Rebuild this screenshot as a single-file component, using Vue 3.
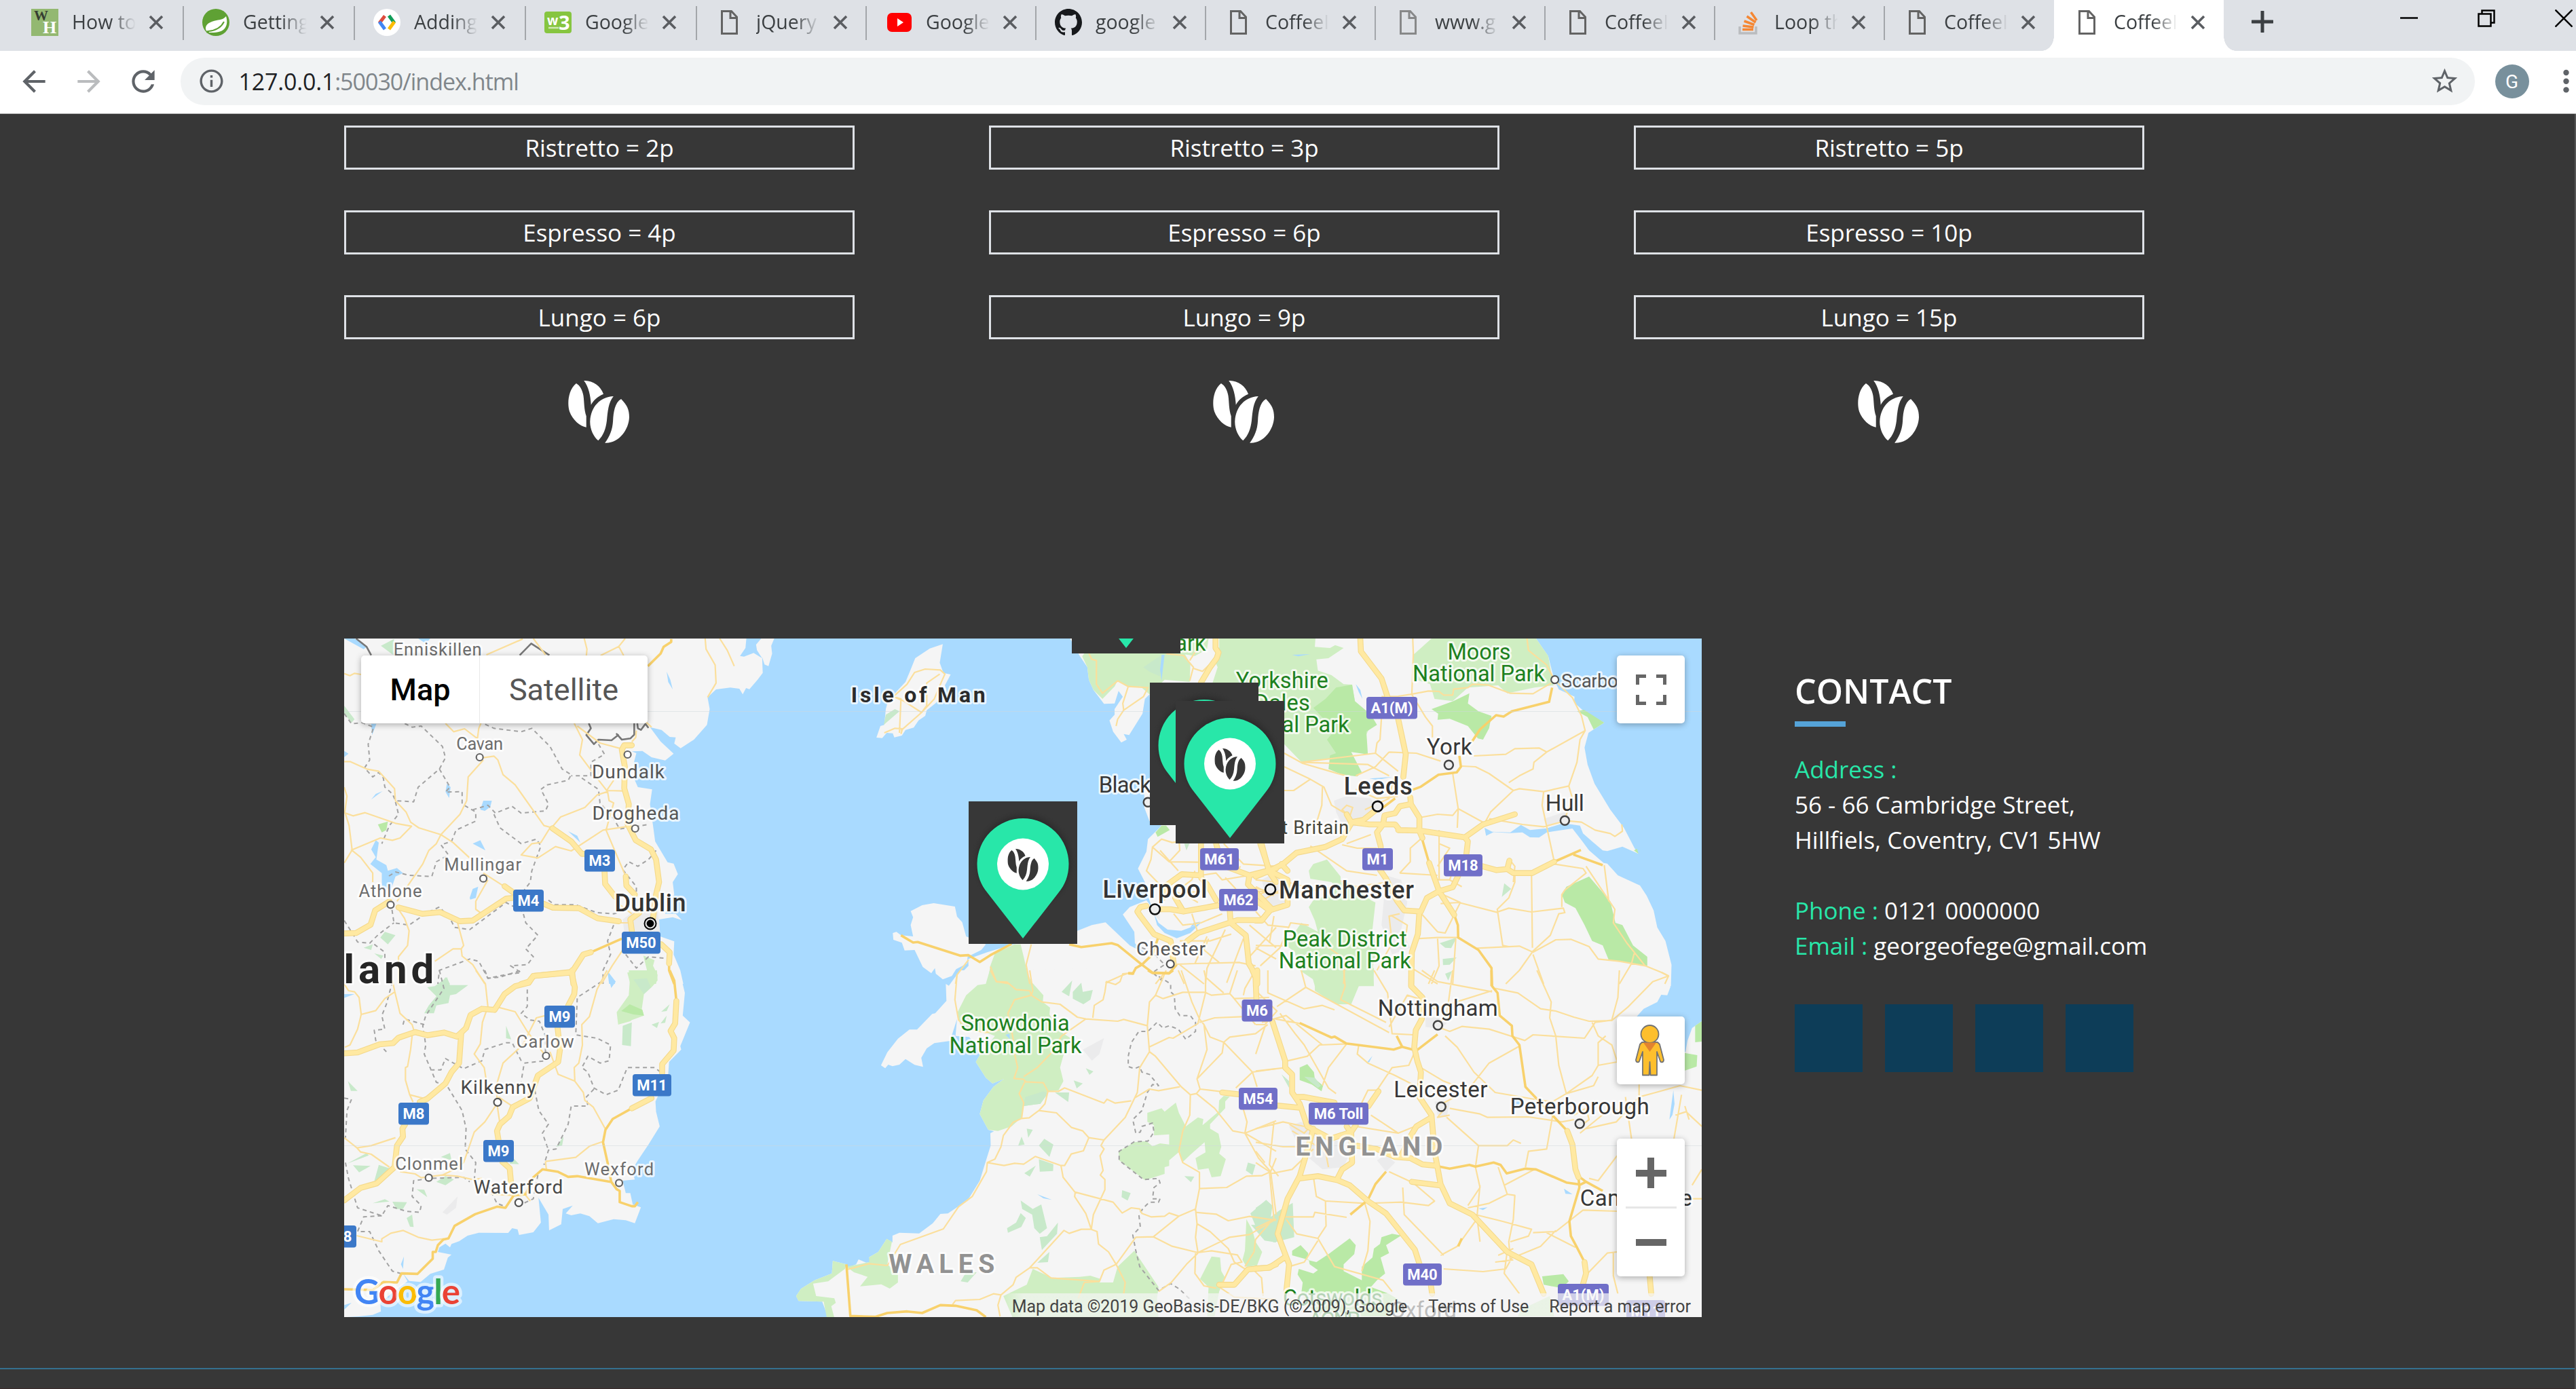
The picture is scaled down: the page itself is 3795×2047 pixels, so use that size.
<script setup>
const tabs = [
  { icon: 'wh', title: 'How to', wide: true },
  { icon: 'spring', title: 'Getting', wide: true },
  { icon: 'dev', title: 'Adding', wide: true },
  { icon: 'w3', title: 'Google', wide: true },
  { icon: 'doc', title: 'jQuery' },
  { icon: 'yt', title: 'Google' },
  { icon: 'gh', title: 'google' },
  { icon: 'doc', title: 'CoffeeI' },
  { icon: 'doc', title: 'www.g', dim: true },
  { icon: 'doc', title: 'CoffeeI' },
  { icon: 'so', title: 'Loop th' },
  { icon: 'doc', title: 'CoffeeI', last: true },
  { icon: 'doc', title: 'CoffeeI', active: true }
]

const prices = [
  ['Ristretto = 2p', 'Espresso = 4p', 'Lungo = 6p'],
  ['Ristretto = 3p', 'Espresso = 6p', 'Lungo = 9p'],
  ['Ristretto = 5p', 'Espresso = 10p', 'Lungo = 15p']
]

// Map sheets: each one has its own drawing units and is placed by its origin.
const SX = 2.24
const SY = 3
const sheets = {
  A: {
    x: 500, y: 930,
    land: 'M0 0L1435 0L1435 33L1425 65L1428 100L1416 155L1403 148L1395 115L1397 185L1380 215L1353 257L1342 252L1331 280L1320 255L1290 250L1243 258L1215 293L1222 345L1213 415L1170 480L1126 518L1105 497L1110 470L1090 468L1063 437L1025 425L1060 488L1103 542L1075 572L1030 558L1000 530L965 532L980 540L970 590L975 660L985 690L1032 700L1025 765L1035 860L1042 930L1083 1022L1103 1028L1117 1075L1100 1110L1105 1165L1090 1200L1075 1250L1110 1250L1130 1278L1100 1265L1055 1275L1058 1350L1105 1372L1103 1430L1125 1500L1135 1560L0 1560Z',
    light: 'M950 1510L1015 1500L1003 1435L1040 1455L1035 1480L1050 1520L1045 1560L960 1560Z',
    dark: 'M127 855L160 842L155 880L140 890Z',
    mint: 'M137 65L180 35L180 108ZM16 330L50 390L40 405L16 365ZM135 1355L150 1330L185 1345L160 1385ZM80 1400L110 1385L105 1410ZM115 1425L145 1435L138 1450ZM350 1530L365 1560H335Z',
    urban: 'M935 1275L975 1235L1050 1235L1058 1330L940 1330Z',
    water: 'M1343 33L1340 75L1322 110L1335 113L1367 97L1395 120L1378 85L1375 60L1392 33ZM16 33L50 33L90 70L80 80ZM260 33L300 33L285 55ZM105 410L122 410L108 460ZM1080 180L1092 215L1100 258L1085 225ZM120 925L130 935L122 1010L155 1035L160 1060L190 1048L210 1070L185 1085L170 1145L140 1130L140 1070L102 1030L120 1000L105 965ZM440 940L465 925L482 970ZM430 1180L440 1140L458 1130L450 1180L432 1187ZM350 710L355 675L367 690L362 738ZM465 790L475 750L503 750L498 778L480 795ZM105 745L120 720L142 708ZM755 885L785 905L795 935ZM885 1508L910 1560L890 1560ZM16 530L30 542L16 557Z',
    minor: 'M16 188L35 197L50 187L72 192M485 105L605 35M640 33L680 105M808 33L817 80L815 108M862 108L922 68L943 33M922 68L938 108M1207 33L1210 80L1240 150L1243 230L1215 293M1255 33L1280 85L1303 155M775 408L802 480L793 548L850 650L885 710L850 725L810 780L730 822L703 865M785 420L860 495L930 520M885 705L935 707M885 710L890 750L905 760L880 880L945 1085M455 480L460 430L467 408M350 408L377 445L413 432L455 475M475 560L510 553L523 570L540 635L580 680L675 860L703 870M475 570L425 645L420 750L398 810L335 900L320 940L295 970L275 1030L190 1195M16 577L35 577L90 610L130 620L182 697L185 750L220 800L235 845L262 870L335 900L375 935L430 1003M16 803L45 817L85 803L185 850L238 863L200 915L175 925L135 915L40 968L70 1000L110 1070L110 1110M16 690L25 730L18 800L32 860L42 968L16 1025M945 865L870 880L765 972L713 953L655 1003L600 990L635 940L665 935L695 870M475 1070L545 1130M490 1100L450 1195L450 1230L465 1245M390 1290L410 1390L402 1405L375 1405L315 1460M402 1405L405 1437L440 1475L480 1560M190 1220L215 1270L230 1325L225 1390L195 1440L195 1560M920 1290L955 1290M945 1390L900 1480L865 1560M980 440L978 470L965 490M1010 400L1030 425M905 660L882 705M925 1210L965 1250',
    trunk: 'M830 1420L932 1360M1088 1470L1088 1500L1105 1560M1018 155L1060 100L1070 70L1095 48L1095 35',
    motor: 'M16 1337L55 1335L103 1298L118 1235L165 1195M195 1222L273 1250L333 1243L397 1283L440 1280L550 1183L573 1180M545 1128L573 1155M673 1205L705 1223L790 1225L852 1270L922 1283M703 872L765 930L800 985L810 985M875 1064L877 1118L910 1175M945 1085L947 1125L975 1165M965 505L940 505L932 525L942 600L940 695L955 765L950 850L978 925L1028 965L1045 1010L1055 1110L1045 1165L1035 1270M990 1245L960 1275L965 1325M1062 1385L1090 1420L1088 1470M600 1560L625 1550L640 1525L768 1507L805 1430L830 1420M768 1507L772 1560',
    border: 'M16 365L40 410L75 405L113 425L95 500L100 570L83 605L110 645L130 625L145 650L150 690L175 720L185 750L245 755L260 690L330 610L350 560L340 510L270 420L240 425L210 405M330 610L365 690L350 712L405 710L405 765L450 800L450 840L385 880L370 930L335 945L360 990L320 1020L305 1085L230 1080L185 1065L155 1090M185 755L195 810L165 860L140 940M440 790L490 770L515 805L570 775L600 805L680 795L690 765L665 700L685 680L755 660L765 635L735 610L695 510L635 430L600 445L510 430L470 405M510 810L530 870L600 940L650 920L665 950L635 1060L630 1110L610 1145M855 500L875 545L830 580L830 640L765 640M800 650L855 700L860 760L905 830L925 875L1020 855M1045 970L1020 1010L985 1040L955 1020L935 1055L980 1130L980 1165M170 1200L180 1290L230 1300L290 1245L330 1220L365 1270L380 1310L430 1320L550 1200L605 1240L615 1290L655 1345L615 1405L640 1440L620 1475L565 1480L600 1510L545 1520L490 1535L460 1460L430 1450L330 1500L325 1560M690 1190L710 1210L780 1210L850 1245L905 1250L920 1245M905 1300L885 1370L895 1430L870 1500L870 1560M945 1430L980 1490L1020 1440L1100 1450M16 1280L45 1340L60 1375L100 1380L130 1340L180 1290M115 1385L150 1420L150 1450',
    nation: 'M55 33L90 70L105 107M595 107L633 55L693 107M823 408L830 430L815 460L840 500L855 480L898 483L920 460L915 455L932 480L960 475L973 458L973 408M983 408L985 430L995 437L1010 410L1020 428'
  },
  B: {
    x: 500, y: 1430,
    land: 'M0 0L1122 0L1140 100L1133 200L1157 230L1125 335L1128 350L1088 405L1085 460L1043 580L1045 625L1057 690L1020 770L985 840L965 885L975 925L935 930L945 985L960 985L968 1035L995 1048L975 1118L945 1105L905 1100L853 1118L825 1087L795 1075L765 1083L747 1075L770 1040L737 1055L732 1123L692 1150L690 1080L657 1005L665 1115L640 1158L593 1170L588 1145L570 1140L557 1161L460 1160L423 1173L395 1198L370 1210L365 1225L350 1208L330 1225L325 1245L370 1257L358 1270L345 1323L300 1342L268 1378L230 1373L210 1340L225 1375L180 1420L135 1470L137 1508L110 1523L65 1530L0 1535Z',
    light: 'M955 0L1048 0L1050 45L1030 75L1005 105L998 170L1005 200L965 220L960 225L920 240L915 185L955 110L958 50Z',
    dark: 'M930 180L958 150L1000 175L1005 200L970 195Z',
    mint: 'M290 75L315 70L355 30L365 65L425 65L385 105L365 110L360 145L320 155L312 190L280 190L295 155L320 115ZM970 40L1015 35L1028 75L1005 105ZM935 245L965 230L962 335L933 330ZM550 245L567 305L550 300ZM1090 150L1062 183L1080 180ZM1080 200L1060 235L1075 232ZM1030 240L1055 228L1048 255ZM28 490L60 533L38 533ZM25 855L90 808L97 818ZM45 862L103 865L65 893ZM130 860L165 875L165 900L115 932ZM320 935L350 910L378 925L350 950ZM335 825L365 808L370 840ZM255 968L280 970L290 1003ZM175 1023L223 1025L210 1055L188 1055ZM110 1030L150 1012L165 1022ZM222 1095L240 1080L245 1135L233 1133ZM740 735L735 775L715 780ZM570 825L593 857L562 855Z',
    urban: 'M340 1070L390 1000L385 1050L355 1080Z',
    water: 'M16 105L50 105L16 122ZM203 1300L213 1265L210 1320ZM883 0L912 50L897 78ZM16 1480L40 1470L16 1500Z',
    minor: 'M450 0L482 60L490 160L472 230L465 325L445 370L478 430L485 490M515 160L580 183L620 270L680 378M680 200L650 210L605 330L540 410L520 500L520 580M883 0L850 85L825 205L800 240L802 330L790 410L775 430L777 490L805 540L810 575L838 605L877 700M695 360L722 460L777 490M520 590L530 680M520 590L480 670L445 715L410 850L380 880L340 905M200 890L250 900L270 917L340 905L390 910L440 925L470 920M525 560L570 600M16 740L58 785L105 775L185 740M58 785L70 803L105 813L165 870M240 290L235 350L225 425L218 430L218 485L232 550L243 582M232 550L275 565M183 95L200 190L240 240L247 270M183 95L175 45M183 95L150 125L120 178L72 195L60 260L35 330L18 340M16 60L30 90L50 95L65 120L72 195M680 845L780 827L825 778L870 757M680 845L683 880M57 1173L140 1200L140 1187L170 1162L210 1150L260 1180L305 1193L345 1187M500 990L575 995M600 970L630 1020',
    trunk: 'M1090 0L1105 45L1112 135M965 610L902 657L878 705L870 760L885 850L897 935L915 968L925 975L925 1025L965 1043L975 1043L985 1025M895 935L785 910L755 913L720 890L670 880L640 915L615 990L575 995L548 1050L520 1045L448 1078L380 1130L360 1185L343 1190L325 1215L318 1245L308 1245L308 1275L258 1342L205 1340L190 1380L145 1378L110 1413L16 1410',
    motor: 'M16 367L60 363L133 327L177 322L195 298L250 273L290 287L345 275L388 293L418 255L433 197L470 170L512 175L545 105L580 70L625 55L640 25L765 10M768 0L768 25L777 75L775 105L755 156M720 254L728 350L722 405L655 465L628 565L572 605L560 645L530 680L520 710L525 750M538 847L562 875L566 935M402 280L395 410L370 450L350 500L290 568L265 582M217 681L208 700L210 735L190 775L182 870L123 942L70 962L16 1017M1112 135L1108 235L1093 268L1105 300L1103 355L1065 415L1065 460M1030 565L965 610',
    border: 'M330 0L345 80L285 200L275 245L285 330L280 370L320 495L355 510L405 620L418 700L415 790L450 850L445 930M480 0L490 35L530 30L600 0M620 85L620 160L600 190L630 220L660 225L680 290L680 400L610 410L600 490M865 50L785 120L780 285L850 300L895 330L890 400L860 410L820 380L800 430L820 450L840 520L880 550L920 530L950 430L1040 430L1060 450M840 525L815 560L820 600L765 600L755 680L715 790L690 795L675 860M645 530L658 620L690 680L670 720L690 795M600 400L570 320L550 320L480 350L470 400L410 435L350 390L335 440L305 440M175 50L155 150L140 200L150 260L115 265L120 310L155 360M280 240L215 215L210 240M16 565L40 570L25 620L20 740M20 850L30 920L60 1050L140 1085L160 1040L220 1065L265 1070L270 1040L240 1000L245 930L300 920L410 915L430 935M140 1085L80 1090L60 1155L100 1155L130 1240L175 1330L215 1345M490 950L520 1030L548 1045M655 905L640 1010L600 1035'
  },
  C: {
    x: 1180, y: 930,
    land: 'M468 58L458 140L470 185L494 192L475 240L480 262L445 318L415 350L410 375L388 395L372 427L345 437L333 462L308 470L303 452L283 450L268 473L249 471L262 420L275 415L280 345L288 305L310 275L345 225L362 170L377 120L425 77ZM888 33L920 110L945 160L950 215L965 260L1000 322L1035 320L1048 265L1062 290L1035 345L1035 370L1018 395L1030 445L1057 493L1075 480L1065 455L1083 460L1127 365L1135 300L1150 280L1160 400L1160 600L1155 640L1133 680L1133 780L1150 840L1190 860L1145 920L1140 975L1112 1050L1135 1110L1150 1190L1165 1250L1180 1290L1210 1320L1255 1325L1285 1310L1320 1290L1285 1335L1240 1358L1200 1335L1175 1300L1160 1225L1140 1190L1085 1220L1062 1253L1100 1330L1102 1380L1135 1425L1085 1390L1005 1288L960 1300L912 1325L880 1345L700 1385L615 1420L552 1450L553 1480L495 1560L1600 1560L1600 0ZM362 1238L400 1212L438 1203L508 1218L515 1262L532 1287L545 1350L610 1385L595 1410L550 1440L548 1470L512 1495L498 1525L468 1540L445 1515L442 1490L430 1513L402 1485L375 1410L342 1412L333 1378L305 1365L303 1335L315 1330L330 1345L370 1350L362 1300L370 1265Z',
    light: 'M928 112L940 90L1262 90L1285 145L1283 225L1200 215L1150 280L1120 245L1080 248L1045 218L1035 245L995 300L965 260L950 215L945 160ZM1252 33L1345 33L1340 80L1300 110L1252 100ZM1380 33H1600V500H1500V230H1358L1375 160L1362 120L1380 90ZM705 1385L725 1385L735 1440L755 1560L615 1560L625 1480L640 1425Z',
    dark: 'M1170 890L1190 860L1205 860L1217 880L1177 910Z',
    mint: 'M273 415L280 370L310 345L325 355ZM1265 940H1282L1272 970ZM1130 160L1185 110V200L1150 180Z',
    urban: 'M1165 1220L1180 1220L1185 1280L1160 1250ZM1520 1100L1560 1070L1568 1200L1540 1190Z',
    water: 'M1190 105L1200 105L1195 160L1190 220L1185 170ZM1285 1310L1295 1290L1320 1285Z',
    minor: 'M275 450L310 430L335 432L330 455M325 450L330 300L305 290M330 440L398 360L415 330L415 230L458 190M305 290L340 310L398 360L440 300L465 220L475 190L460 172L410 168L375 183L350 235L305 290M950 100L960 125L975 130L975 235L995 275L1045 220L1080 245L1145 250L1130 290L1065 350L1045 390L1040 420M1080 245L1062 320L1065 350M1205 100L1262 108L1295 160L1283 220M1312 33L1302 90L1283 130M1295 165L1325 178L1355 140M1160 955L1190 920L1225 935L1248 930L1250 970L1215 1020L1160 955L1155 1010L1140 1060L1180 1115M1215 1020L1310 1022M1185 970L1245 1060M1250 1140L1290 1100L1300 1060M1320 1080L1370 1070L1390 1100L1480 1080M1400 1090L1435 1140M1395 940L1460 1030L1568 1040M1285 1180L1310 1200M1450 1040L1440 1060M760 1385L743 1475L755 1560M553 1453L515 1520L510 1560M625 1483L645 1550L690 1560M1240 1473L1300 1470L1340 1350M1250 1475L1330 1560M1300 1470L1445 1465L1500 1480M1335 1560L1340 1490L1400 1320M1405 1555L1440 1430L1460 1360M1500 1400L1568 1450M1245 1500L1265 1560M1480 1300L1568 1400M1005 1555L1055 1525L1080 1513M1200 1510L1170 1560M1180 1115L1250 1160L1320 1150M1230 1250L1260 1300L1320 1290L1390 1250M1310 1335L1290 1250M1420 1340L1350 1370L1250 1370M1480 1130L1568 1160M1500 1100L1568 1110M1490 1180L1568 1130M1480 1440L1568 1310M1345 1360L1330 1410L1380 1465',
    trunk: 'M330 1345L370 1377L385 1375L525 1435L553 1433L590 1463L625 1433L695 1383M885 1385L925 1397L1025 1380L1045 1388L1125 1475L1160 1510L1215 1513L1240 1475M1125 1475L1105 1490L1095 1515L1080 1513M1125 1475L1160 1430L1180 1350',
    motor: 'M1368 33L1368 75L1378 95L1372 120L1350 160L1320 228M1320 940L1320 1080L1257 1075L1200 1130L1195 1180M1185 1230L1220 1230L1262 1240L1375 1213M1235 1180L1262 1240M1140 1215L1120 1220L1110 1240L1120 1260L1165 1340L1220 1370L1230 1470M1320 1090L1340 1120L1370 1190M1370 940L1390 1035L1480 1080L1475 1120L1555 1230M1520 940L1545 1065L1568 1110M1480 1080L1568 1050M1415 1236L1418 1290L1468 1345L1478 1470L1500 1520L1503 1560M1275 1370L1310 1335L1440 1278L1520 1278L1545 1240',
    border: 'M1125 1400L1160 1420L1200 1475L1160 1510L1200 1555',
    nation: ''
  },
  D: {
    x: 1180, y: 1430,
    land: 'M1600 -20L525 0L488 68L478 60L480 135L443 190L433 193L383 262L358 262L320 302L285 362L264 420L278 433L288 417L302 424L325 417L345 392L375 418L403 427L397 387L415 345L440 322L492 312L515 215L510 290L555 295L580 335L590 375L577 405L610 475L632 500L670 480L635 515L602 575L590 635L618 705L637 712L625 720L626 775L590 930L553 1010L520 1043L485 1075L460 1077L435 1118L390 1163L325 1160L302 1173L302 1203L283 1187L255 1245L225 1268L230 1290L215 1292L190 1278L182 1300L155 1315L150 1300L105 1285L102 1340L45 1370L0 1408L-16 1440L-8 1462L70 1465L90 1535L1600 1560Z',
    light: 'M625 -10L740 -10L760 50L800 110L798 140L822 165L820 195L855 270L890 300L865 380L855 430L866 490L850 530L815 535L790 590L735 600L728 650L695 690L650 710L618 705L590 635L602 575L635 515L670 480L632 500L610 475L577 405L590 375L640 290L600 270L530 260L515 190L545 110L583 65L610 60ZM1143 630L1190 610L1200 625L1237 585L1247 630L1270 690L1310 650L1328 658L1325 685L1378 625L1380 575L1395 555L1415 558L1400 580L1400 610L1350 680L1350 700L1378 722L1387 780L1380 810L1402 835L1385 910L1355 915L1345 875L1310 882L1302 830L1335 805L1332 760L1285 815L1258 850L1250 800L1215 840L1215 865L1200 870L1200 900L1135 928L1050 840L1048 800L1100 760L1140 755L1160 778L1185 765L1215 770L1215 725L1165 730L1165 685L1143 670ZM668 1440L745 1390L765 1320L830 1360L920 1355L955 1350L990 1365L985 1380L1030 1380L1045 1310L1100 1240L1140 1320L1180 1400L1175 1450L1180 1540L700 1540ZM255 1245L283 1187L300 1200L285 1300L320 1340L320 1380L293 1407L265 1388L195 1397L220 1355L175 1335L150 1310L225 1290L225 1268ZM-16 1440L0 1408L45 1370L102 1340L105 1285L150 1300L145 1320L90 1375L40 1385L50 1440L110 1450L115 1470L100 1485L110 1535L85 1535L75 1465L-8 1462ZM1465 1240L1470 1100L1490 1150L1500 1200L1522 1245L1505 1305L1470 1310L1457 1280ZM1317 1365L1355 1265L1383 1270L1387 1330L1400 1360L1380 1420L1365 1530L1340 1530L1345 1400Z',
    dark: '',
    mint: 'M735 600L740 560L800 535L815 545L790 590ZM725 1018L765 1055L793 1035L812 1140L788 1165L770 1140L763 1080L730 1055ZM788 1180L812 1175L848 1115L845 1165L795 1237ZM680 1140L710 1115L725 1073L742 1095L727 1135L683 1160ZM785 775L803 745L833 770L820 825ZM785 835L833 857L832 887L788 890ZM775 863L737 897L755 912ZM838 540L885 540L882 582ZM897 95L925 55L930 95L963 87L955 130L932 150L897 125ZM860 95L895 45L885 115ZM1483 1075L1535 1015L1555 1040L1545 1090L1500 1130ZM1485 1125L1568 1130L1568 1203L1530 1195ZM1265 910L1298 912L1287 937ZM1475 850L1500 860L1490 905L1468 885ZM1060 972L1088 985L1078 1018L1058 1003ZM780 1293L820 1245L815 1290ZM545 1335L580 1335L550 1380L527 1375ZM745 700L765 705L750 740ZM728 735L738 770L717 775ZM940 433L965 447L952 462ZM900 487L930 500L910 522Z',
    urban: 'M570 90L600 80L620 110L600 140ZM930 350L1000 300L985 370L960 400Z',
    water: 'M780 990L828 1015L800 1008ZM675 285L688 280L690 305Z',
    minor: 'M515 20L508 130L520 220L550 260L610 275L680 255M625 0L645 50L680 52L710 85L755 90L760 110L705 130L683 190L700 300L705 370L715 430L703 478L735 482L742 493L800 497L815 535L850 535L870 520L1000 587L1010 570L1037 587L1090 577M755 0L765 90L760 110L795 140L855 150L912 207L940 215L1045 225L1065 217L1143 245M940 215L860 290L830 360L780 430L735 470M1080 13L1062 15L1053 50L1038 63L1008 50L1003 95L997 130L968 155L963 210M1205 0L1170 110L1150 140L1143 245L1150 360L1118 430L1110 540L1070 650L1000 750L950 740L930 710L893 695L843 630L785 620L753 652L728 655L735 585L720 545L740 490M815 535L805 590L785 620M1100 565L1150 525L1180 532L1250 515M728 655L700 672L668 730L660 780L640 835L615 850L670 863L705 853L735 857L773 823L858 863L870 863L892 812L932 798L950 740M615 850L612 890L565 1000L520 1045L470 1143L328 1212L285 1305L225 1297L155 1322M858 863L865 915L905 982L903 1000L940 1075L958 1145M903 980L1030 1025L1060 1073L1090 1050L1118 1055L1125 1075L1155 1090L1200 1087L1215 1073L1247 1087L1302 1055M1000 750L990 775L1000 790L987 820L997 885L988 905L1003 925L1003 970L965 1080L958 1145L925 1145L885 1163L868 1150L755 1315L710 1357L700 1390L660 1435L635 1430L590 1455L510 1460L500 1478M958 1145L977 1155L982 1210L1015 1245L1040 1300L1000 1325L985 1375L825 1360L780 1315L755 1315M985 1375L935 1380L915 1450M660 1435L650 1480L657 1530M1040 1300L1105 1180L1163 1178L1247 1087M1040 1300L1070 1380L1065 1430M1163 1178L1225 1220L1310 1248L1302 1180L1307 1120L1302 1055L1315 965L1315 893L1260 850L1247 800L1260 710L1283 640L1285 550L1255 515L1170 380L1150 360M1285 550L1305 545L1317 525L1307 480L1340 350L1330 240L1315 215L1290 140L1255 0M1307 480L1390 365L1395 318L1350 295L1330 240M1395 318L1490 450L1505 515M1395 318L1415 295L1500 280L1540 240M1315 230L1365 210L1455 205M1170 110L1195 125L1260 97L1333 97L1355 110L1415 103L1430 125L1545 120M1148 340L1215 297L1228 300L1310 235L1335 100L1335 30L1330 0M1335 30L1395 100M1415 103L1440 0M1460 110L1465 80L1495 10M1420 110L1500 240M1317 525L1440 545M1305 545L1365 610L1425 710L1465 720L1568 665M1465 720L1472 670L1460 615M1465 720L1510 830L1550 890L1568 830M1465 720L1568 800M1315 965L1405 960L1470 910L1520 908L1550 890L1568 1080M1302 1070L1370 1078L1410 1107L1480 1088L1568 1105M1307 1120L1350 1155L1410 1230L1430 1290L1465 1320M1310 1248L1415 1180L1480 1168L1568 1100M1310 1248L1355 1240L1440 1258L1455 1290L1420 1300L1385 1400M1310 1250L1272 1300L1222 1380L1180 1420M1302 1250L1300 1340L1330 1395L1370 1405M1490 450L1568 435M1490 450L1435 520M1380 1400L1430 1445L1568 1455M1490 1320L1520 1360L1525 1440M1545 1120L1500 1190L1495 1245L1465 1310',
    trunk: 'M150 1300L163 1528L245 1532L285 1515L350 1508L400 1515L460 1480L510 1483L580 1503L610 1533M1145 0L1160 12L1215 13L1228 0M1080 13L1100 13',
    motor: 'M1490 0L1500 30L1503 130M1390 540L1445 548M1568 1300L1540 1315L1475 1322L1430 1390L1380 1390',
    border: 'M1160 10L1220 60L1220 95L1232 110L1235 170L1250 200L1285 200L1302 230L1302 270L1270 305L1245 260L1215 245L1195 255L1175 230L1145 270L1115 270L1090 320L1080 380L1080 425L1100 435L1118 425L1125 450L1150 460L1180 510L1160 505L1143 540L1125 620L1095 660L1105 720L1120 715L1125 690L1160 675L1165 715L1145 755L1100 758L1050 800L1050 840L1130 925L1180 920L1185 940L1165 960L1160 1010L1185 1010L1180 1025L1150 1025L1130 1050L1115 1080L1120 1135L1095 1170L1105 1240L1118 1310L1180 1415L1220 1385L1250 1410L1280 1450L1280 1480',
    nation: ''
  },
  E: {
    x: 1850, y: 930,
    land: 'M-20 0L920 0L925 33L965 110L985 215L1000 258L1052 290L1050 315L1083 355L1150 405L1115 435L1098 450L1085 515L1095 590L1118 675L1170 790L1215 870L1250 960L1263 985L1210 953L1160 973L1145 970L1110 930L1080 895L1070 860L1015 850L960 872L905 880L875 857L840 890L780 887L755 870L760 905L785 889L840 893L880 890L905 912L935 913L960 890L1045 873L1075 925L1100 970L1148 1025L1160 1028L1195 1080L1268 1125L1290 1170L1313 1235L1325 1310L1352 1370L1372 1475L1370 1570L-20 1570Z',
    light: 'M-20 33L197 33L195 70L245 75L262 62L290 75L240 120L200 125L205 175L250 195L290 235L318 237L330 330L380 415L350 500L270 560L150 578L94 500L-20 500ZM520 105L580 33L925 33L965 110L983 240L920 250L830 275L800 240L700 250L650 310L590 300L575 235L530 215L520 150ZM175 1060L190 1030L235 1010L280 1085L280 1110L320 1120L380 1190L395 1200L385 1320L400 1400L387 1480L390 1570L195 1570L180 1500L135 1480L130 1420L100 1390L150 1290L205 1330L195 1280L175 1220L190 1190L255 1160L265 1130L250 1110L180 1095Z',
    dark: 'M265 250L318 237L327 310L380 370L400 415L365 445L370 545L315 535L350 625L335 643L285 635L240 610L245 550L265 540L235 480L260 440L190 340L230 300ZM580 345L652 310L705 275L700 320L735 355L778 375L770 430L750 480L733 475L700 420L640 388L600 392L602 365ZM1060 355L1083 348L1150 405L1115 435L1095 380ZM1010 1165L1025 1130L1100 1085L1170 1195L1187 1290L1210 1300L1245 1390L1292 1440L1292 1480L1165 1455L1145 1390L1110 1370L1085 1300L1055 1225L1020 1200ZM1248 970L1258 962L1263 985Z',
    mint: 'M820 1115L843 1140L812 1175ZM607 1380L663 1355L645 1402L625 1400ZM617 1450L663 1443L640 1475L618 1477ZM625 1515L648 1503L635 1545Z',
    urban: 'M258 750L300 730L380 740L400 800L340 860L290 870L265 800ZM430 1080L480 1100L500 1200L480 1320L510 1400L450 1430L415 1300ZM950 830L1020 800L1040 830L960 865ZM40 1090L80 1070L110 1200L60 1230L20 1180Z',
    water: 'M330 235L345 260L352 300L340 270ZM375 652L450 645L400 658ZM120 105L180 102L140 112Z',
    minor: 'M518 33L520 100L515 280L560 380L583 420L583 470M415 290L470 288L510 280L570 265L605 267L620 283L650 283L653 257L700 250L715 235L765 238L840 275L915 277L975 230M895 33L900 85L960 150L985 215L1045 295L1075 375L1087 440L960 535L935 517L855 520L825 545L720 552M1087 440L1070 480L1060 580L1033 685L1045 740L1020 830M150 580L395 540L400 495L410 480L415 380M440 535L530 540L610 575M440 535L395 600L330 640M150 580L370 590L440 640M395 540L470 620M680 597L725 600L770 630L850 705L870 697L950 710L1033 685M850 705L775 800L755 850M835 670L870 640L915 610L918 580L960 535M650 630L668 785L750 845M668 785L650 815L600 810L540 825M668 785L665 870M950 710L945 770L985 1020M1020 838L1075 845L1120 880L1170 895L1185 908L1210 885L1208 855M770 830L880 855L950 865L1020 840M605 880L605 1100M548 915L510 960L510 1020L475 1070M285 945L335 960L400 960M94 600L180 655L225 690L250 770L300 810M94 705L125 705L180 655M94 540L155 585L245 620L270 630L300 640M220 690L218 770L200 850M300 770L320 780L310 820L285 790ZM610 1205L670 1200L795 1243L835 1225L910 1242L1015 1225L1020 1245L1000 1250L972 1345L915 1415L870 1500L825 1560M855 1075L855 1110L835 1180L797 1230L815 1390L835 1395M910 1075L913 1400M730 1402L870 1393L915 1420L990 1365L1040 1363L1100 1395L1130 1450L1200 1460L1285 1480L1340 1510L1362 1525L1350 1560M985 1030L1080 1050L1090 1070L1020 1145L1010 1165L1010 1220M1090 1040L1130 1120L1185 1230L1180 1290L1225 1380L1285 1480M1150 1035L1165 1195M1250 1420L1240 1470L1200 1560M640 1100L680 1130M590 1100L640 1100L650 1060M610 1160L675 1200L625 1335L600 1330M540 1240L600 1330M440 1110L330 1130L280 1105M110 1160L180 1150L260 1130M105 1110L160 1130M180 950L300 1060L400 1080M15 1480L80 1400L115 1290L175 1300M0 1390L90 1392M240 1400L295 1450L290 1560M45 1380L60 1260M530 1360L600 1355L667 1355M600 1360L605 1480L580 1560M515 1490L600 1560M400 1500L450 1380L440 1260L475 1250M450 1260L500 1300L490 1400M660 1360L650 1560M915 1430L950 1560M0 1240L40 1300L110 1310M0 1130L60 1170M10 1200L100 1130M0 1150L90 1160M600 1040L640 960L605 940M380 900L300 940M475 1070L600 1080M455 650L440 740L360 790M330 700L400 740L470 730M840 1015L855 1040L850 1110',
    trunk: 'M978 250L968 313L845 355L818 378L793 372L740 435L713 490M672 552L677 600L663 625L603 635L545 688L515 703M460 740L420 780M548 915L572 1025M655 1255L667 1300L668 1355L735 1410L778 1490L778 1570M985 1020L1073 968M1048 988L1145 1035',
    motor: 'M345 33L347 90L415 210L435 292M470 388L495 545L487 645M510 735L512 765L540 825L540 885L550 915M470 880L540 882L690 912L750 855L855 810M690 912L700 930L695 986M668 1082L650 1132L605 1150L565 1180L545 1240M572 1025L605 1150L655 1255M748 1040L795 1057L830 1052L850 1070L912 1070L985 1020M830 1052L837 1015M410 1056L430 1095L465 1190L490 1235L540 1240L535 1340L515 1420L513 1570M415 1000L412 950L400 890L420 855L460 855L475 880M300 810L315 845L375 855L420 855M315 845L355 835L402 785M420 855L425 815L460 805L475 775L512 765M0 1085L45 1060L90 1030L135 980L228 955L285 920L315 850M15 940L45 1060L105 1100L105 1210L45 1235L0 1190M45 1235L20 1280L0 1280M85 1030L105 1060',
    border: '', nation: ''
  },
  F: {
    x: 1850, y: 1430,
    land: 'M-20 -10L1370 -10L1368 75L1358 110L1338 108L1325 140L1280 170L1250 215L1240 400L1300 420L1418 360L1425 310L1440 255L1472 225L1500 225L1500 1560L-20 1560Z',
    light: 'M145 0L390 -10L388 60L340 70L315 150L265 150L195 90L195 45ZM865 1530L875 1500L970 1440L985 1530Z',
    dark: 'M145 430L170 415L192 450L195 480L222 510L217 535L185 505L145 485ZM120 1240L148 1215L173 1250L170 1280L200 1290L240 1255L255 1240L310 1185L330 1215L325 1255L290 1300L290 1330L350 1370L350 1310L385 1270L390 1230L410 1210L415 1180L450 1165L480 1172L430 1215L440 1250L412 1270L427 1340L400 1370L380 1400L440 1430L500 1480L450 1530L200 1530L150 1430L155 1380L138 1345L142 1320L190 1340L205 1325L178 1300L175 1280L120 1260ZM945 1353L1015 1343L1033 1375L1010 1405L950 1390ZM1472 225L1450 245L1450 318L1472 315ZM1415 365L1457 375L1455 425L1416 443Z',
    mint: 'M0 1050L35 1018L55 1040L50 1090L80 1060L122 1028L127 1180L60 1203L0 1140ZM85 460L110 490L110 520ZM160 470L195 475L215 510L205 520Z',
    urban: 'M110 690L150 670L240 740L320 780L290 870L220 880L150 800ZM560 200L640 220L610 260L560 250ZM400 840L430 815L460 850L430 890ZM590 580L640 580L630 650L600 640Z',
    water: 'M365 410L385 378L375 405ZM1365 660L1378 530L1382 590L1375 640ZM1017 965L1045 990L1022 988ZM850 570H880V600H855ZM735 1053L765 1048L750 1060Z',
    minor: 'M0 90L70 180L30 240L0 240M40 0L40 100L160 170L220 155L260 175M70 160L165 75L150 0M165 75L440 275M290 0L295 70L280 130L430 230M80 190L130 280L160 330L240 520L265 545M65 215L145 235M390 0L435 100L450 280L520 285M550 130L500 110L440 250M548 0L600 50L780 95M590 0L570 60M650 0L630 200L600 240M570 140L590 170L780 90M610 255L640 270L680 248L770 260L888 310L915 285L1085 300L1120 230L1175 220M790 80L865 100L940 170L990 180L1050 207L1100 225L1175 222L1230 160L1310 50L1362 25L1340 10M1200 0L1195 120L1175 220M928 0L975 140L970 210L990 290L1000 420L1025 545M1110 230L1130 290L1175 330L1192 400M1155 290L1130 320L1130 420L1192 405M1130 420L1110 465L1025 545L980 580L940 575M1025 545L1115 510L1130 470M625 290L665 340L720 450L790 540L920 570M870 335L770 410L700 530L600 600M545 430L620 490L700 530M340 330L335 370L370 410L460 465L540 520M300 325L240 430L220 510M530 345L505 420L450 430L400 530L370 530L330 640M0 445L100 430M105 400L170 380L210 330L300 325M0 700L90 670L160 690M0 760L90 780L160 780M60 670L45 860L75 910M45 900L120 880L190 790M45 890L60 1100L0 1140M0 850L45 890M190 910L200 1000L230 1020L232 1130L205 1185L135 1165L100 1100M205 1185L260 1310L420 1370L450 1420M232 1020L360 1030L377 1110L370 1240L350 1330M205 1195L160 1290L110 1310M75 1090L190 1090L195 1070L300 1092M440 890L520 940L590 1020L570 1040L480 1025L370 1030M485 960L490 1080L620 1260M620 1320L750 1332L825 1320L850 1260M610 1260L665 1220L735 1090M640 610L740 635L765 650L900 648L1010 670L1050 660M630 650L735 775L830 775L850 750L875 765M735 775L725 870L740 960L700 1040M740 950L730 1090L740 1200M800 870L820 950L830 990L770 1030L700 1050M820 950L920 880M830 990L855 995L850 1100L835 1200L840 1280M725 1080L815 1110L910 1145L900 1175L840 1200M915 1160L990 1155L1080 1060L1192 1065M990 1150L940 1220L850 1270M960 1160L1055 1225M830 1240L820 1340L870 1430M1090 700L1190 670L1265 560L1265 505M1070 720L1180 600L1192 620M1100 920L1130 930L1192 820M1095 1340L1160 1250L1192 1245M1180 1250L1180 1350L1195 1430M1220 560L1240 745M1265 560L1320 540L1400 510L1472 530M1405 550L1380 745M1385 640L1420 625L1472 690M1416 600L1430 660M980 640L960 790L900 800L890 870M1418 1010L1472 1010M1472 880L1440 950M330 690L470 720M380 640L470 720L580 660M110 680L160 720L180 690M120 710L230 800L240 870M0 800L30 850M20 230L100 200L220 330M0 370L30 250M630 600L600 650L640 640M1050 640L1090 610L1100 660L1060 700M800 1260L850 1230M790 1290L850 1280',
    trunk: 'M778 0L780 70L798 100L805 200L845 245L847 290L870 330L890 515L1028 710M145 233L250 297L260 293L298 323L455 350L483 338L530 355L600 283M465 290L483 338M595 865L640 877L705 860L725 868L785 850L808 860L828 898L890 877L925 880L1025 938L1072 947L1090 935L1145 975M1065 915L1068 960L1035 1110L1040 1175L1060 1225L1085 1290M430 890L395 945L370 1015L312 1080M680 1185L668 1220M1065 910L1090 935',
    motor: 'M5 0L5 60M513 0L513 70L550 120L548 215L528 265L523 340L533 400L545 450L540 560L580 640L590 800L610 945L640 1030L715 1080L830 1245L910 1300L950 1430M55 227L97 400L97 430L120 460L120 540L145 590L170 690L240 740M72 598L150 608M135 560L160 560L260 585M190 700L165 820L145 910L105 1010L72 1165L100 1265L110 1300L100 1430M0 1318L45 1315L100 1265M145 920L205 910L270 928L310 950L370 1020L430 1075L525 1235L540 1297M578 1393L582 1430M300 690L315 720L318 850L285 880L268 925M330 685L315 715L245 745M405 535L372 600M580 650L530 690L510 735L480 820M330 775L400 790L460 825L510 830L550 858L590 863M515 935L605 950M1028 710L1045 770L1055 880L1065 915M1085 1290L1090 1340L1080 1387M1300 1353L1305 1430',
    border: '', nation: ''
  }
}
const layers = ['land', 'urban', 'light', 'dark', 'mint', 'water', 'border', 'nation', 'minor', 'trunk', 'motor-case', 'motor']
const shape = (s, layer) => s[layer === 'motor-case' ? 'motor' : layer]
const place = s => `translate(${s.x} ${s.y}) scale(${1 / SX} ${1 / SY})`
const px = (k, x) => sheets[k].x + x / SX
const py = (k, y) => sheets[k].y + y / SY

// [sheet, x, baseline, text, style, rendered width, anchor]
const labels = [
  ['A', 324, 108, 'Enniskillen', 'town', 130],
  ['A', 463, 524, 'Cavan', 'town', 69],
  ['A', 953, 650, 'Dundalk', 'mid', 107],
  ['A', 978, 833, 'Drogheda', 'mid', 128],
  ['A', 473, 1059, 'Mullingar', 'town', 114],
  ['A', 168, 1175, 'Athlone', 'town', 93],
  ['A', 1026, 1238, 'Dublin', 'metro', 105],
  ['A', 163, 1557, 'land', 'country', 133],
  ['B', 679, 343, 'Carlow', 'town', 85],
  ['B', 524, 545, 'Kilkenny', 'mid2', 111],
  ['B', 296, 883, 'Clonmel', 'town', 100],
  ['B', 590, 988, 'Waterford', 'mid2', 132],
  ['B', 923, 906, 'Wexford', 'town', 102],
  ['C', 387, 315, 'Isle of Man', 'isle', 198],
  ['C', 1168, 1178, 'Liverpool', 'metro', 154],
  ['C', 1221, 1433, 'Chester', 'mid', 102],
  ['C', 983, 713, 'Blackpool', 'city', 138, 'start'],
  ['C', 1336, 88, 'National Park', 'park', 195, 'end'],
  ['D', 707, 268, 'Snowdonia', 'park', 160],
  ['D', 708, 365, 'National Park', 'park', 195],
  ['D', 464, 1338, 'WALES', 'realm', 156],
  ['E', 87, 253, 'Yorkshire', 'park', 136],
  ['E', 87, 350, 'Dales', 'park', 82],
  ['E', 90, 448, 'National Park', 'park', 195],
  ['E', 737, 125, 'Moors', 'park', 93],
  ['E', 736, 223, 'National Park', 'park', 195],
  ['E', 1008, 248, 'Scarborough', 'mid', 152, 'start'],
  ['E', 639, 547, 'York', 'city', 67],
  ['E', 404, 722, 'Leeds', 'metro', 101],
  ['E', 1020, 795, 'Hull', 'city', 57],
  ['E', 307, 897, 'Great Britain', 'brit', 158, 'end'],
  ['E', 299, 1182, 'Manchester', 'metro', 199],
  ['E', 294, 1395, 'Peak District', 'park', 183],
  ['E', 294, 1490, 'National Park', 'park', 195],
  ['F', 601, 200, 'Nottingham', 'city', 177],
  ['F', 610, 560, 'Leicester', 'city', 138],
  ['F', 1069, 635, 'Peterborough', 'city', 205],
  ['F', 374, 818, 'ENGLAND', 'realm', 217],
  ['F', 1255, 1040, 'Cambridge', 'city', 165],
  ['F', 254, 1483, 'Cotswolds', 'park', 147],
  ['F', 260, 1580, 'AONB', 'park', 77],
  ['F', 553, 1535, 'Oxford', 'city', 98]
]

const dots = [
  ['A', 463, 558], ['A', 951, 546], ['A', 976, 873], ['A', 475, 1094], ['A', 169, 1210],
  ['B', 682, 378], ['B', 522, 583, 1], ['B', 295, 917], ['B', 592, 1027, 1], ['B', 923, 940],
  ['C', 1145, 757, 2], ['C', 1168, 1230, 3], ['C', 1219, 1472, 1], ['C', 1549, 1142, 3],
  ['E', 987, 215, 1], ['E', 637, 592, 2], ['E', 402, 775, 3], ['E', 1020, 838, 2],
  ['F', 601, 243, 2], ['F', 612, 603, 2], ['F', 1069, 678, 2]
]
const dotR = [5, 5.5, 6.5, 7.5]

// [x, y, width, text, British?]
const roads = [
  [861, 1252, 45, 'M3'], [756, 1311, 45, 'M4'], [916, 1373, 57, 'M50'], [802, 1482, 45, 'M9'],
  [932, 1583, 57, 'M11'], [587, 1625, 45, 'M8'], [712, 1680, 45, 'M9'], [480, 1806, 45, 'M8'],
  [1768, 1250, 57, 'M61', 1], [1796, 1310, 57, 'M62', 1], [2013, 1027, 75, 'A1(M)', 1],
  [2007, 1250, 45, 'M1', 1], [2127, 1259, 57, 'M18', 1], [1829.5, 1473, 45, 'M6', 1],
  [1825, 1603, 57, 'M54', 1], [1928, 1625, 88, 'M6 Toll', 1], [2067, 1862, 57, 'M40', 1],
  [2295, 1892, 75, 'A1(M)', 1], [2396, 1916, 57, 'M11', 1]
]

const pins = [[1579, 753], [1694, 1006], [1732, 1033], [1427, 1181]]
const beans = [
  'M526 1185C508 1215 507 1280 512 1310C518 1345 534 1375 547 1379L547 1330C542 1300 543 1270 541 1240C539 1215 534 1195 526 1185Z',
  'M542 1173C560 1172 577 1195 583 1232C570 1244 562 1260 557 1280C556 1240 552 1200 542 1173Z',
  'M604 1242C575 1245 557 1290 555 1350C554 1385 562 1420 572 1438C583 1415 588 1385 590 1350C592 1310 593 1270 604 1242Z',
  'M620 1254C632 1280 637 1300 637 1335C636 1390 615 1452 586 1448C596 1420 602 1390 603 1350C604 1310 607 1270 620 1254Z'
].join('')
</script>

<template>
  <div class="window">
    <header class="tabstrip">
      <div v-for="(t, i) in tabs" :key="i" class="tab" :class="{ wide: t.wide, active: t.active, last: t.last }">
        <svg class="favicon" :class="{ dim: t.dim }" viewBox="0 0 40 40">
          <template v-if="t.icon === 'wh'">
            <rect width="40" height="40" fill="#93b871" />
            <text x="4" y="17" class="wh-w">W</text>
            <text x="17" y="36" class="wh-h">H</text>
          </template>
          <template v-else-if="t.icon === 'spring'">
            <circle cx="20" cy="20" r="20" fill="#5fa134" />
            <path d="M35 11c-3 4-8 5-14 6C12 19 4 22 5 30c1 3 3 5 5 5 9 0 18 0 23-6 4-5 4-12 2-18Z" fill="#fff" />
            <path d="M9 33c11-1 19-6 23-14" fill="none" stroke="#5fa134" stroke-width="2" />
            <circle cx="8" cy="34" r="2" fill="#5fa134" />
          </template>
          <template v-else-if="t.icon === 'dev'">
            <circle cx="20" cy="20" r="20" fill="#fff" />
            <g fill="none" stroke-width="5">
              <path d="M17 10.500L9 21" stroke="#dd4b3e" /><path d="M9 19L17 30" stroke="#4285f4" />
              <path d="M23 10L31 21" stroke="#109d58" /><path d="M31 19L23 30" stroke="#fbbc05" />
            </g>
          </template>
          <template v-else-if="t.icon === 'w3'">
            <rect y="4" width="40" height="32" rx="4" fill="#86c540" />
            <text x="4" y="24" class="w3-w">w</text>
            <text x="21" y="31" class="w3-3">3</text>
            <path d="M6 28H21" stroke="#fff" stroke-width="2.500" opacity=".6" />
          </template>
          <path v-else-if="t.icon === 'doc'" d="M9.500 3.500h14l8 8.500v24.500H9.500ZM22 4v9.500h10" fill="none" stroke="#636363" stroke-width="3" />
          <template v-else-if="t.icon === 'yt'">
            <rect x="3" y="6" width="36" height="28" rx="7" fill="#f00" />
            <path d="M18 14v12l9-6Z" fill="#fff" />
          </template>
          <path v-else-if="t.icon === 'gh'" transform="scale(2.5)" fill="#17191c" d="M8 0C3.580 0 0 3.580 0 8c0 3.540 2.290 6.530 5.470 7.590.4.070.55-.170.55-.380 0-.190-.010-.820-.010-1.490-2.010.370-2.530-.490-2.690-.940-.090-.230-.480-.940-.820-1.130-.280-.150-.680-.520-.010-.530.630-.010 1.080.580 1.230.820.720 1.210 1.870.870 2.330.660.070-.520.280-.870.510-1.070-1.780-.200-3.640-.890-3.640-3.950 0-.870.310-1.590.820-2.150-.080-.200-.360-1.020.080-2.120 0 0 .670-.210 2.200.820.640-.180 1.320-.270 2-.270s1.360.090 2 .270c1.530-1.040 2.200-.820 2.200-.820.440 1.100.160 1.920.080 2.120.510.560.820 1.270.820 2.150 0 3.070-1.870 3.750-3.650 3.950.290.250.540.730.540 1.480 0 1.070-.010 1.930-.010 2.200 0 .210.150.460.550.380A8.010 8.010 0 0 0 16 8c0-4.420-3.580-8-8-8Z" />
          <template v-else-if="t.icon === 'so'">
            <path d="M9 26v10h24V26" fill="none" stroke="#babcbf" stroke-width="3.500" />
            <path d="M13 30.500h16M13.500 25l16 2M15.500 18l15 5.500M19.500 11l13 9M25.500 5l8.500 12" stroke="#f58733" stroke-width="3.500" />
          </template>
        </svg>
        <span class="tab-title">{{ t.title }}</span>
        <svg class="tab-close" viewBox="0 0 22 22"><path d="M2 2L20 20M20 2L2 20" /></svg>
      </div>
      <svg class="new-tab" viewBox="0 0 32 32"><path d="M16 1V31M1 16H31" /></svg>
      <div class="controls">
        <svg width="26" height="26" viewBox="0 0 26 26"><path d="M0 12.500H26" /></svg>
        <svg width="26" height="26" viewBox="0 0 26 26"><path d="M1.500 6.500H19.500V24.500H1.500ZM6.500 6V1.500H24.500V19.500H20" /></svg>
        <svg width="26" height="26" viewBox="0 0 26 26"><path d="M.5 .5L25.500 25.500M25.500 .5L.5 25.500" /></svg>
      </div>
    </header>

    <div class="toolbar">
      <svg class="nav" viewBox="0 0 24 24"><path d="M20 11H7.830l5.590-5.590L12 4l-8 8 8 8 1.410-1.410L7.830 13H20v-2z" /></svg>
      <svg class="nav off" viewBox="0 0 24 24"><path d="M12 4l-1.410 1.410L16.170 11H4v2h12.170l-5.580 5.590L12 20l8-8z" /></svg>
      <svg class="nav" viewBox="0 0 24 24"><path d="M17.650 6.350C16.200 4.900 14.210 4 12 4c-4.420 0-7.990 3.580-7.990 8s3.570 8 7.990 8c3.730 0 6.840-2.550 7.730-6h-2.080c-.820 2.330-3.040 4-5.650 4-3.310 0-6-2.690-6-6s2.690-6 6-6c1.660 0 3.140.690 4.220 1.780L13 11h7V4l-2.350 2.350z" /></svg>
      <div class="omnibox">
        <svg class="info" viewBox="0 0 24 24"><path d="M11 17h2v-6h-2v6zm1-15C6.480 2 2 6.480 2 12s4.480 10 10 10 10-4.480 10-10S17.520 2 12 2zm0 18c-4.410 0-8-3.590-8-8s3.590-8 8-8 8 3.590 8 8-3.590 8-8 8zM11 9h2V7h-2v2z" /></svg>
        <span class="url"><b>127.0.0.1</b>:50030/index.html</span>
        <svg class="star" viewBox="0 0 24 24"><path d="M22 9.240l-7.190-.620L12 2 9.190 8.630 2 9.240l5.460 4.730L5.820 21 12 17.270 18.180 21l-1.630-7.030L22 9.240zM12 15.400l-3.760 2.270 1-4.280-3.320-2.880 4.380-.380L12 6.100l1.710 4.040 4.380.380-3.320 2.880 1 4.280L12 15.400z" /></svg>
      </div>
      <span class="avatar">G</span>
      <svg class="menu" viewBox="0 0 9 36"><circle cx="4.500" cy="5" r="4.200" /><circle cx="4.500" cy="17.700" r="4.200" /><circle cx="4.500" cy="30.400" r="4.200" /></svg>
    </div>

    <main class="page">
      <section class="prices">
        <div v-for="(col, i) in prices" :key="i" class="col">
          <div v-for="p in col" :key="p" class="price">{{ p }}</div>
          <svg class="beans" viewBox="509 1173 128 276" preserveAspectRatio="none"><path :d="beans" /></svg>
        </div>
      </section>

      <section class="find">
        <div class="map">
          <svg class="canvas" viewBox="507 941 2000 1000">
            <g v-for="layer in layers" :key="layer" :class="layer">
              <path v-for="(s, k) in sheets" :key="k" :d="shape(s, layer)" :transform="place(s)" vector-effect="non-scaling-stroke" />
            </g>
            <path d="M507 1048.500H2507M507 1688.500H2507" stroke="#d0d8dc" stroke-opacity=".5" stroke-width="1.200" />
            <circle v-for="(d, i) in dots" :key="'d' + i" class="dot" :class="'dot' + (d[3] || 0)" :cx="px(d[0], d[1])" :cy="py(d[0], d[2])" :r="dotR[d[3] || 0]" />
            <g transform="translate(958 1361)">
              <circle r="9.500" fill="#000" /><circle r="6.500" fill="none" stroke="#ddd" stroke-width="2.200" />
            </g>
            <text v-for="(l, i) in labels" :key="'l' + i" :class="l[4]" :x="px(l[0], l[1])" :y="py(l[0], l[2])" :text-anchor="l[6] || 'middle'" :textLength="l[5]">{{ l[3] }}</text>
            <g v-for="(r, i) in roads" :key="'r' + i">
              <rect :x="r[0]" :y="r[1]" :width="r[2]" height="32.500" rx="4" :fill="r[4] ? '#706fc8' : '#3b78c8'" />
              <text class="road" :x="r[0] + r[2] / 2" :y="r[1] + 24" text-anchor="middle">{{ r[3] }}</text>
            </g>
            <text class="logo" x="522" y="1922" textLength="156"><tspan fill="#4285f4">G</tspan><tspan fill="#ea4335">o</tspan><tspan fill="#fbbc05">o</tspan><tspan fill="#4285f4">g</tspan><tspan fill="#34a853">l</tspan><tspan fill="#ea4335">e</tspan></text>
            <defs>
              <radialGradient id="pinShade">
                <stop offset=".75" stop-color="#1c1c1c" stop-opacity=".75" /><stop offset="1" stop-color="#373737" stop-opacity="0" />
              </radialGradient>
            </defs>
            <g v-for="(p, i) in pins" :key="'p' + i" :transform="`translate(${p[0]} ${p[1]})`">
              <rect width="160" height="210" fill="#373737" />
              <circle cx="81" cy="89" r="79" fill="url(#pinShade)" />
              <path d="M80 202L27.500 134.500C18 123 12.500 109 12.500 92.500a67.500 67.500 0 0 1 135 0C147.500 109 142 123 132.500 134.500Z" fill="#28e7a9" />
              <circle cx="80" cy="92.500" r="38" fill="#fff" />
              <svg x="57.300" y="70" width="45.400" height="48" viewBox="509 1173 128 276" preserveAspectRatio="none"><path :d="beans" fill="#373737" /></svg>
            </g>
          </svg>

          <div class="types"><span class="type on">Map</span><span class="type">Satellite</span></div>
          <div class="ctl full"><svg width="45" height="45" viewBox="0 0 45 45"><path d="M0 0H15V5H5V15H0ZM45 0V15H40V5H30V0ZM0 45V30H5V40H15V45ZM45 45H30V40H40V30H45Z" fill="#666" /></svg></div>
          <div class="ctl pegman">
            <svg width="43" height="76" viewBox="0 0 43 76">
              <g fill="#fdbf2d" stroke="#737373" stroke-width="1.800" stroke-linejoin="round">
                <path d="M10 26H33L36 29L42 52C42 56 38 56 37 54L32 40V74.500H22.500L21.500 55L20.500 74.500H11V40L6 54C5 56 1 56 1 52L7 29Z" />
                <circle cx="21.500" cy="14" r="13" />
              </g>
              <path d="M12 26.500H31L21.500 40Z" fill="#e2832f" />
            </svg>
          </div>
          <div class="zoom"><i class="plus"></i><hr><i class="minus"></i></div>
          <div class="legal">
            <span class="l1">Map data ©2019 GeoBasis-DE/BKG (©2009), Google</span><span class="l2">Terms of Use</span><span class="l3">Report a map error</span>
          </div>
        </div>

        <aside class="contact">
          <h2>CONTACT</h2>
          <p><em>Address :</em><br>56 - 66 Cambridge Street,<br>Hillfiels, Coventry, CV1 5HW</p>
          <p><em>Phone :</em> 0121 0000000<br><em>Email :</em> georgeofege@gmail.com</p>
          <div class="social"><a v-for="n in 4" :key="n"></a></div>
        </aside>
      </section>
      <footer></footer>
    </main>
  </div>
</template>

<style>
body { background: #373737; overflow: hidden; }
</style>

<style scoped>
.window { width: 3795px; height: 2047px; overflow: hidden; background: #373737; display: flex; flex-direction: column; font-family: "Open Sans", "Noto Sans", sans-serif; }

.tabstrip { height: 75px; flex: none; background: #dee1e6; display: flex; padding-left: 18px; box-sizing: border-box; }
.tab { position: relative; width: 250px; height: 75px; display: flex; box-sizing: border-box; padding: 13px 0 0 28px; }
.tab.wide { width: 252px; }
.tab::after { content: ""; position: absolute; right: -1px; top: 9px; width: 2.500px; height: 50px; background: #a3a6aa; }
.tab.active { background: #fff; }
.tab.last::after { display: none; }
.tab.active::before, .tab.active::after { content: ""; position: absolute; top: auto; bottom: 0; width: 18px; height: 22px; }
.tab.active::before { left: -18px; right: auto; background: radial-gradient(18px 22px at 0 0, transparent 98%, #fff 100%); }
.tab.active::after { right: -18px; background: radial-gradient(18px 22px at 100% 0, transparent 98%, #fff 100%); }
.favicon { width: 40px; height: 40px; flex: none; }
.favicon.dim { opacity: .7; }
.wh-w { font: bold 21px "Liberation Serif", serif; fill: #363d31; }
.wh-h { font: bold 26px "Liberation Serif", serif; fill: #fff; }
.w3-w { font: bold 19px "Open Sans", sans-serif; fill: #fff; }
.w3-3 { font: bold 29px "Open Sans", sans-serif; fill: #fff; }
.tab-title { width: 94px; margin: 0 19px 0 20px; height: 40px; line-height: 39px; font-size: 28.500px; color: #3c4043; white-space: nowrap; overflow: hidden; -webkit-mask-image: linear-gradient(90deg, #000 60%, transparent 100%); mask-image: linear-gradient(90deg, #000 60%, transparent 100%); }
.tab-close { width: 22px; height: 22px; margin-top: 9px; flex: none; }
.tab-close path { stroke: #5a5d61; stroke-width: 3.600; }
.new-tab { width: 32px; height: 32px; margin: 16px 0 0 41px; }
.new-tab path { stroke: #3c4043; stroke-width: 5; stroke-linecap: round; }
.controls { margin: 14px 5px 0 auto; display: flex; gap: 88px; }
.controls svg { fill: none; stroke: #000; stroke-width: 2.500; }

.toolbar { height: 93px; flex: none; background: #fff; display: flex; align-items: center; box-sizing: border-box; padding: 0 10px 3px 25px; border-bottom: 1px solid #b3b3b3; }
.nav { width: 50px; height: 50px; margin-right: 30.500px; fill: #5f6368; flex: none; }
.nav.off { fill: #babcbe; }
.omnibox { width: 3380px; height: 70px; border-radius: 35px; background: #f1f3f4; display: flex; align-items: center; box-sizing: border-box; padding: 0 22px 0 25px; margin-left: -1px; flex: none; }
.info { width: 41px; height: 41px; fill: #5f6368; margin-right: 20px; }
.url { font-size: 34px; color: #80868b; letter-spacing: -1px; line-height: 70px; }
.url b { font-weight: 400; color: #202124; letter-spacing: -.2px; }
.star { width: 45px; height: 45px; fill: #5f6368; margin-left: auto; }
.avatar { width: 50px; height: 50px; border-radius: 50%; background: #78909c; color: #fff; font: 28px/51px Roboto, sans-serif; text-align: center; margin-left: 30px; flex: none; }
.menu { width: 9px; height: 36px; margin-left: 50px; fill: #5f6368; flex: none; }

.page { flex: 1; display: flex; flex-direction: column; padding-top: 17px; border-right: 2px solid #555; }
.prices { display: flex; gap: 198px; padding-left: 507px; }
.col { width: 752px; display: flex; flex-direction: column; align-items: center; gap: 60px; }
.price { width: 752px; height: 65px; box-sizing: border-box; border: 3px solid #dee1e6; color: #fff; font-size: 35px; line-height: 60px; text-align: center; }
.beans { width: 90px; height: 92px; margin-left: -3px; margin-top: 1px; fill: #fff; }

.find { display: flex; margin-top: 288px; padding-left: 507px; }
.map { position: relative; width: 2000px; height: 1000px; overflow: hidden; background: #a9daff; font-family: Roboto, sans-serif; flex: none; }
.canvas { display: block; width: 2000px; height: 1000px; }
.land { fill: #f5f5f5; }
.urban { fill: #ebebec; }
.light { fill: #cfeec2; }
.dark { fill: #b9e9a6; }
.mint { fill: #c8e9ca; }
.water { fill: #a9daff; }
.border, .nation, .minor, .trunk, .motor, .motor-case { fill: none; stroke-linejoin: round; }
.border { stroke: #a3a3a3; stroke-width: 2; stroke-dasharray: 6 5; }
.nation { stroke: #777; stroke-width: 2.600; }
.minor { stroke: #fbdf9c; stroke-width: 2.200; }
.trunk { stroke: #f8d16c; stroke-width: 3.600; }
.motor-case { stroke: #f4d98b; stroke-width: 8.600; stroke-linecap: round; }
.motor { stroke: #ffe9a2; stroke-width: 6.400; stroke-linecap: round; }
.dot { fill: #fff; stroke: #666; stroke-width: 2.200; }
.dot1 { stroke: #555; }
.dot2 { fill: #eee; stroke: #444; stroke-width: 2.500; }
.dot3 { fill: #eee; stroke: #111; stroke-width: 2.600; }
.canvas text { font-family: Roboto, sans-serif; paint-order: stroke; stroke: rgba(255, 255, 255, .75); stroke-width: 6px; stroke-linejoin: round; }
.canvas .town { font-size: 25.500px; fill: #6d6d6d; }
.canvas .mid { font-size: 28px; fill: #555; }
.canvas .mid2 { font-size: 28px; fill: #484848; }
.canvas .city { font-size: 33px; fill: #373737; }
.canvas .metro { font-size: 36px; font-weight: 500; fill: #333; }
.canvas .brit { font-size: 27px; fill: #45453a; }
.canvas .park { font-size: 32.500px; fill: #1d811f; }
.canvas .isle { font-size: 32px; font-weight: 700; fill: #2b2b2b; }
.canvas .realm { font-size: 39px; font-weight: 700; fill: #929292; }
.canvas .country { font-size: 60px; font-weight: 700; fill: #262626; }
.canvas .road { font-size: 22px; font-weight: 700; fill: #fff; stroke: none; }
.canvas .logo { font: 700 51px Lato, sans-serif; stroke: rgba(255, 255, 255, .6); stroke-width: 9px; }

.types { position: absolute; left: 25px; top: 25px; height: 100px; display: flex; background: #fff; border-radius: 5px; box-shadow: 0 2px 10px rgba(0, 0, 0, .3); }
.type { width: 247px; font-size: 45px; line-height: 101px; text-align: center; color: #565656; }
.type.on { width: 174px; color: #000; font-weight: 500; border-right: 1px solid #e8e8e8; }
.ctl { position: absolute; left: 1875px; width: 100px; height: 100px; background: #fff; border-radius: 5px; box-shadow: 0 2px 10px rgba(0, 0, 0, .3); display: flex; align-items: center; justify-content: center; }
.full { top: 25px; }
.pegman { top: 557px; }
.pegman svg { margin-right: 3px; }
.zoom { position: absolute; left: 1875px; top: 737px; width: 100px; height: 203px; background: #fff; border-radius: 5px; box-shadow: 0 2px 10px rgba(0, 0, 0, .3); display: flex; flex-direction: column; align-items: center; }
.zoom hr { width: 75px; height: 3px; border: 0; margin: 27px 0 45px; background: #e6e6e6; }
.plus { width: 45px; height: 45px; margin-top: 28px; background: linear-gradient(#666, #666) center / 45px 10px no-repeat, linear-gradient(#666, #666) center / 10px 45px no-repeat; }
.minus { width: 45px; height: 10px; background: #666; }
.legal { position: absolute; right: 0; bottom: 0; width: 1030px; height: 35px; box-sizing: border-box; padding: 0 16px 0 0; display: flex; justify-content: flex-end; background: linear-gradient(90deg, rgba(245, 245, 245, 0), rgba(245, 245, 245, .7) 30px); font-size: 25px; line-height: 39px; color: #444; white-space: nowrap; }
.l1 { letter-spacing: -.03px; }
.l2 { margin: 0 30px 0 31px; }

.contact { margin-left: 137px; color: #fff; font-size: 35px; line-height: 52px; white-space: nowrap; }
.contact h2 { margin: 42px 0 0; font-size: 50px; font-weight: 600; line-height: 70px; padding-bottom: 10px; }
.contact h2::after { content: ""; display: block; width: 75px; height: 8px; margin-top: 10px; background: #55a3d8; }
.contact p { margin: 27px 0 0; }
.contact p + p { margin-top: 52px; }
.contact em { font-style: normal; color: #28e7a9; }
.social { display: flex; gap: 33px; margin-top: 60px; }
.social a { width: 100px; height: 100px; background: #0d3d58; }
footer { margin-top: 75px; height: 28px; border-top: 2px solid #34708f; border-bottom: 2px solid #3a2a2a; }
</style>
